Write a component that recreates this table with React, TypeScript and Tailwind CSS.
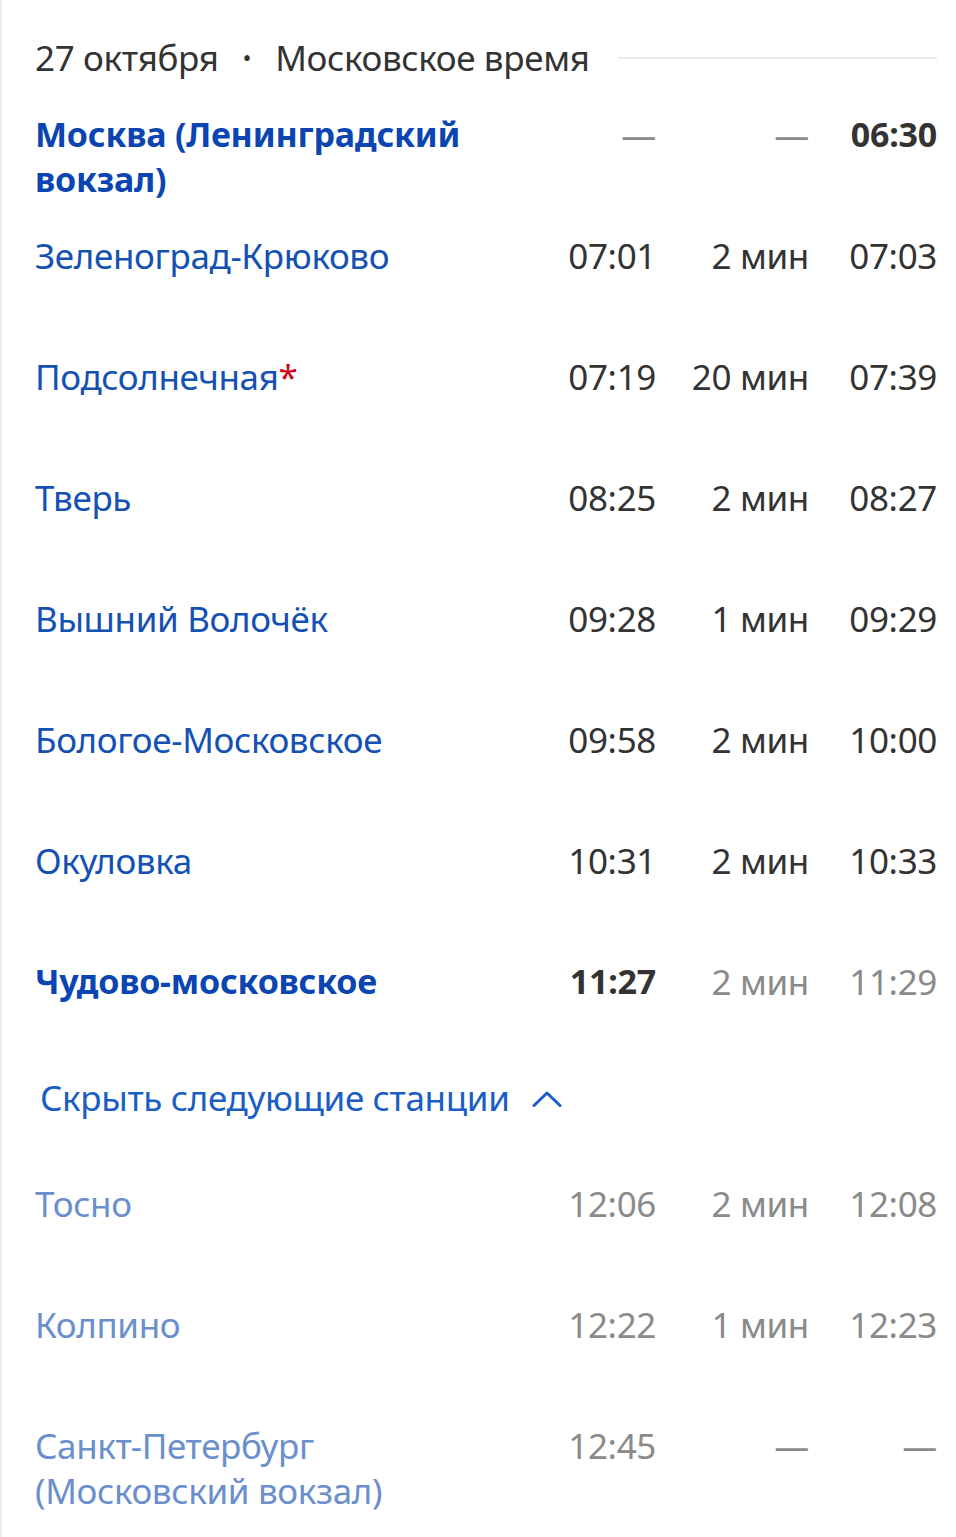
type Stop = {
  name: string;
  arr: string;
  stop: string;
  dep: string;
  kind?: "bold" | "faded";
  star?: boolean;
};

const mainStops: Stop[] = [
  { name: "Москва (Ленинградский вокзал)", arr: "—", stop: "—", dep: "06:30", kind: "bold" },
  { name: "Зеленоград-Крюково", arr: "07:01", stop: "2 мин", dep: "07:03" },
  { name: "Подсолнечная", arr: "07:19", stop: "20 мин", dep: "07:39", star: true },
  { name: "Тверь", arr: "08:25", stop: "2 мин", dep: "08:27" },
  { name: "Вышний Волочёк", arr: "09:28", stop: "1 мин", dep: "09:29" },
  { name: "Бологое-Московское", arr: "09:58", stop: "2 мин", dep: "10:00" },
  { name: "Окуловка", arr: "10:31", stop: "2 мин", dep: "10:33" },
];

const nextStops: Stop[] = [
  { name: "Тосно", arr: "12:06", stop: "2 мин", dep: "12:08", kind: "faded" },
  { name: "Колпино", arr: "12:22", stop: "1 мин", dep: "12:23", kind: "faded" },
  { name: "Санкт-Петербург (Московский вокзал)", arr: "12:45", stop: "—", dep: "—", kind: "faded" },
];

const gray = "text-[#8a8a8a]";
const dark = "text-[#333333]";

function Row({ s }: { s: Stop }) {
  const nameColor =
    s.kind === "bold"
      ? "text-[#0a45b1] font-bold text-[34px] tracking-[-0.2px]"
      : s.kind === "faded"
        ? "text-[#6b8fcc]"
        : "text-[#1451b2]";
  const timeColor = s.kind === "faded" ? gray : dark;
  return (
    <div className="flex items-start h-[121px]">
      <div className={`flex-1 pr-6 ${nameColor}`}>
        {s.name}
        {s.star && <span className="text-[#d0021b]">*</span>}
      </div>
      <div className={`w-[120px] text-right ${s.arr === "—" ? gray : timeColor}`}>{s.arr}</div>
      <div className={`w-[153px] text-right ${s.stop === "—" ? gray : timeColor}`}>{s.stop}</div>
      <div
        className={`w-[128px] text-right ${s.dep === "—" ? gray : timeColor} ${
          s.kind === "bold" ? "font-bold text-[34px] tracking-[-0.2px]" : ""
        }`}
      >
        {s.dep}
      </div>
    </div>
  );
}

export default function App() {
  return (
    <div
      className="min-h-[1537px] bg-white border-l-2 border-[#ececec] pl-[33px] pr-[19px] pt-[35px] text-[35px] leading-[45px] tracking-[-0.35px]"
      style={{ fontFamily: '"Noto Sans", "Open Sans", sans-serif' }}
    >
      <div className="flex items-center h-[45px] text-[#333333] mb-[32px]">
        <span>27 октября</span>
        <span className="mx-[24px] text-[24px]">•</span>
        <span>Московское время</span>
        <div className="flex-1 ml-[28px] h-[2px] bg-[#ebebeb]" />
      </div>

      {mainStops.map((s) => (
        <Row key={s.name} s={s} />
      ))}

      {/* последняя видимая станция перед скрытыми */}
      <div className="flex items-start h-[116px]">
        <div className="flex-1 pr-6 text-[#0a45b1] font-bold text-[34px] tracking-[-0.2px]">
          Чудово-московское
        </div>
        <div className="w-[120px] text-right text-[#333333] font-bold text-[34px] tracking-[-0.2px]">11:27</div>
        <div className={`w-[153px] text-right ${gray}`}>2 мин</div>
        <div className={`w-[128px] text-right ${gray}`}>11:29</div>
      </div>

      <div className="h-[106px]">
        <button className="flex items-center gap-[22px] pl-[5px] text-[#1a5ec4]">
          <span>Скрыть следующие станции</span>
          <svg width="30" height="18" viewBox="0 0 30 18" fill="none" className="mt-[2px]">
            <polyline
              points="2,15.5 15,3 28,15.5"
              stroke="currentColor"
              strokeWidth="3"
              strokeLinecap="round"
              strokeLinejoin="round"
            />
          </svg>
        </button>
      </div>

      {nextStops.map((s) => (
        <Row key={s.name} s={s} />
      ))}
    </div>
  );
}
